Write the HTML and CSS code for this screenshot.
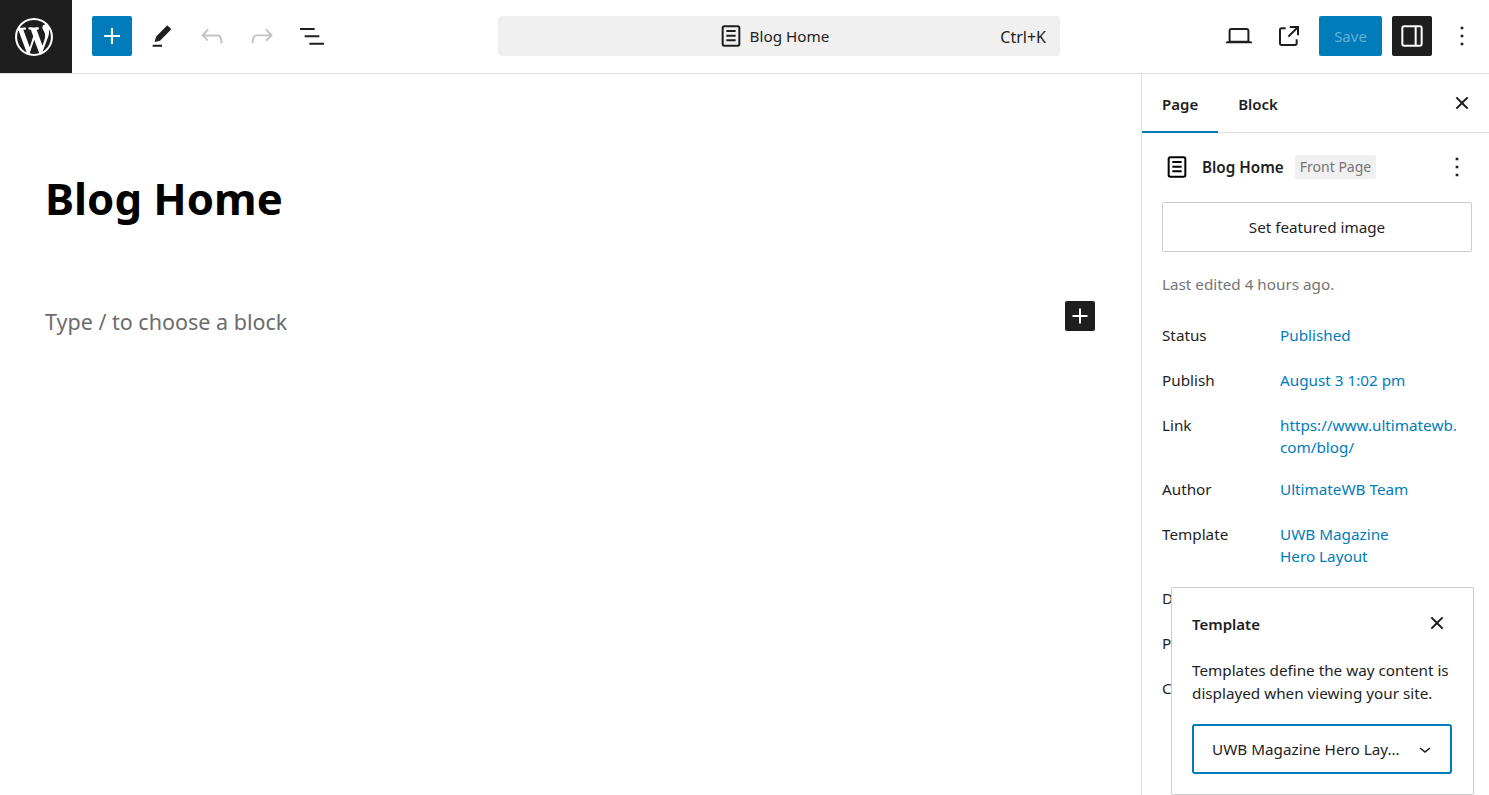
FILE: index.html
```html
<!DOCTYPE html>
<html lang="en">
<head>
  <meta charset="UTF-8">
  <title>Edit Page: Blog Home</title>
  <link rel="stylesheet" href="styles.css">
</head>
<body>
  <header class="topbar">
    <a class="logo" href="#">
      <svg width="38" height="38" viewBox="0 0 20 20"><path d="M20 10c0-5.51-4.49-10-10-10C4.48 0 0 4.49 0 10c0 5.52 4.48 10 10 10 5.51 0 10-4.48 10-10zM7.78 15.37L4.37 6.22c.55-.02 1.17-.08 1.17-.08.5-.06.44-1.13-.06-1.11 0 0-1.45.11-2.37.11-.18 0-.37 0-.58-.01C4.12 2.69 6.87 1.11 10 1.11c2.33 0 4.45.87 6.05 2.34-.68-.11-1.65.39-1.65 1.58 0 .74.45 1.36.9 2.1.35.61.55 1.36.55 2.46 0 1.49-1.4 5-1.4 5l-3.03-8.37c.54-.02.82-.17.82-.17.5-.05.44-1.25-.06-1.22 0 0-1.44.12-2.38.12-.87 0-2.33-.12-2.33-.12-.5-.03-.56 1.2-.06 1.22l.92.08 1.26 3.41zM17.41 10c.24-.64.74-1.87.43-4.25.7 1.29 1.05 2.71 1.05 4.25 0 3.29-1.73 6.24-4.4 7.78.97-2.59 1.94-5.2 2.92-7.78zM6.1 18.09C3.12 16.65 1.11 13.53 1.11 10c0-1.3.23-2.48.72-3.59C3.25 10.3 4.67 14.2 6.1 18.09zm4.03-6.63l2.58 6.98c-.86.29-1.76.45-2.71.45-.79 0-1.57-.11-2.29-.33.81-2.38 1.62-4.74 2.42-7.1z"/></svg>
    </a>
    <div class="tools">
      <button class="icon-btn primary"><svg viewBox="0 0 24 24"><path d="M18 11.2h-5.2V6h-1.6v5.2H6v1.6h5.2V18h1.6v-5.2H18z"/></svg></button>
      <button class="icon-btn"><svg viewBox="0 0 24 24"><path d="m19 7-3-3-8.5 8.5-1 4 4-1L19 7Zm-7 11.5H5V20h7v-1.5Z"/></svg></button>
      <button class="icon-btn disabled"><svg viewBox="0 0 24 24"><path d="M18.3 11.7c-.6-.6-1.4-.9-2.3-.9H6.7l2.9-3.3-1.1-1-4.5 5L8.5 16l1-1-2.7-2.7H16c.5 0 .9.2 1.3.5 1 1 1 3.4 1 4.5v.3h1.5v-.2c0-1.5 0-4.3-1.5-5.7z"/></svg></button>
      <button class="icon-btn disabled"><svg viewBox="0 0 24 24"><path d="M15.6 6.5l-1.1 1 2.9 3.3H8c-.9 0-1.7.3-2.3.9-1.4 1.5-1.4 4.2-1.4 5.6v.2h1.5v-.3c0-1.1 0-3.5 1-4.5.3-.3.7-.5 1.3-.5h9.2L14.5 15l1.1 1.1 4.6-4.6-4.6-5z"/></svg></button>
      <button class="icon-btn"><svg viewBox="0 0 24 24"><path d="M3 6h11v1.5H3V6Zm3.5 5.5h11V13h-11v-1.5ZM21 17H10v1.5h11V17Z"/></svg></button>
    </div>
    <div class="command">
      <div class="command-title">
        <svg viewBox="0 0 24 24"><path d="M15.5 7.5h-7V9h7V7.5Zm-7 3.5h7v1.5h-7V11Zm7 3.5h-7V16h7v-1.5Z"/><path d="M17 4H7a2 2 0 0 0-2 2v12a2 2 0 0 0 2 2h10a2 2 0 0 0 2-2V6a2 2 0 0 0-2-2ZM7 5.5h10a.5.5 0 0 1 .5.5v12a.5.5 0 0 1-.5.5H7a.5.5 0 0 1-.5-.5V6a.5.5 0 0 1 .5-.5Z"/></svg>
        <span>Blog Home</span>
      </div>
      <span class="shortcut">Ctrl+K</span>
    </div>
    <div class="actions">
      <button class="icon-btn"><svg viewBox="0 0 24 24"><path d="M20.5 16h-.7V8c0-1.1-.9-2-2-2H6.2c-1.1 0-2 .9-2 2v8h-.7c-.8 0-1.5.7-1.5 1.5h20c0-.8-.7-1.5-1.5-1.5zM5.7 8c0-.3.2-.5.5-.5h11.6c.3 0 .5.2.5.5v7.6H5.7V8z"/></svg></button>
      <button class="icon-btn"><svg viewBox="0 0 24 24"><path d="M19.5 4.5h-7V6h4.44l-5.97 5.97 1.06 1.06L18 7.06v4.44h1.5v-7Zm-13 1a2 2 0 0 0-2 2v10a2 2 0 0 0 2 2h10a2 2 0 0 0 2-2v-3H17v3a.5.5 0 0 1-.5.5h-10a.5.5 0 0 1-.5-.5v-10a.5.5 0 0 1 .5-.5h3V5.5h-3Z"/></svg></button>
      <button class="save">Save</button>
      <button class="icon-btn dark"><svg viewBox="0 0 24 24"><path d="M18 4H6c-1.1 0-2 .9-2 2v12c0 1.1.9 2 2 2h12c1.1 0 2-.9 2-2V6c0-1.1-.9-2-2-2zm-4 14.5H6c-.3 0-.5-.2-.5-.5V6c0-.3.2-.5.5-.5h8v13zm4.5-.5c0 .3-.2.5-.5.5h-2.5v-13H18c.3 0 .5.2.5.5v12z"/></svg></button>
      <button class="icon-btn"><svg viewBox="0 0 24 24"><path d="M13 19h-2v-2h2v2zm0-6h-2v-2h2v2zm0-6h-2V5h2v2z"/></svg></button>
    </div>
  </header>

  <div class="workspace">
    <main class="editor">
      <h1 class="post-title">Blog Home</h1>
      <div class="empty-block">
        <p>Type / to choose a block</p>
        <button class="block-add"><svg viewBox="0 0 24 24"><path d="M18 11.2h-5.2V6h-1.6v5.2H6v1.6h5.2V18h1.6v-5.2H18z"/></svg></button>
      </div>
    </main>

    <aside class="sidebar">
      <div class="tabs">
        <button class="tab active">Page</button>
        <button class="tab">Block</button>
        <button class="tab-close"><svg viewBox="0 0 24 24"><path d="M12 13.06l3.712 3.713 1.061-1.06L13.061 12l3.712-3.712-1.06-1.06L12 10.938 8.288 7.227l-1.061 1.06L10.939 12l-3.712 3.712 1.06 1.061L12 13.061z"/></svg></button>
      </div>
      <div class="panel">
        <div class="summary">
          <svg class="summary-icon" viewBox="0 0 24 24"><path d="M15.5 7.5h-7V9h7V7.5Zm-7 3.5h7v1.5h-7V11Zm7 3.5h-7V16h7v-1.5Z"/><path d="M17 4H7a2 2 0 0 0-2 2v12a2 2 0 0 0 2 2h10a2 2 0 0 0 2-2V6a2 2 0 0 0-2-2ZM7 5.5h10a.5.5 0 0 1 .5.5v12a.5.5 0 0 1-.5.5H7a.5.5 0 0 1-.5-.5V6a.5.5 0 0 1 .5-.5Z"/></svg>
          <strong>Blog Home</strong>
          <span class="badge">Front Page</span>
          <svg class="summary-more" viewBox="0 0 24 24"><path d="M13 19h-2v-2h2v2zm0-6h-2v-2h2v2zm0-6h-2V5h2v2z"/></svg>
        </div>
        <button class="featured">Set featured image</button>
        <p class="edited">Last edited 4 hours ago.</p>
        <dl class="rows">
          <div class="row"><dt>Status</dt><dd>Published</dd></div>
          <div class="row"><dt>Publish</dt><dd>August 3 1:02 pm</dd></div>
          <div class="row"><dt>Link</dt><dd>https://www.ultimatewb.<br>com/blog/</dd></div>
          <div class="row"><dt>Author</dt><dd>UltimateWB Team</dd></div>
          <div class="row"><dt>Template</dt><dd>UWB Magazine<br>Hero Layout</dd></div>
          <div class="row"><dt>D</dt></div>
          <div class="row"><dt>P</dt></div>
          <div class="row"><dt>C</dt></div>
        </dl>
      </div>

      <div class="popover">
        <div class="popover-head">
          <h2>Template</h2>
          <svg viewBox="0 0 24 24"><path d="M12 13.06l3.712 3.713 1.061-1.06L13.061 12l3.712-3.712-1.06-1.06L12 10.938 8.288 7.227l-1.061 1.06L10.939 12l-3.712 3.712 1.06 1.061L12 13.061z"/></svg>
        </div>
        <p>Templates define the way content is displayed when viewing your site.</p>
        <div class="select">
          <span>UWB Magazine Hero Lay...</span>
          <svg viewBox="0 0 24 24"><path d="M17.5 11.6L12 16l-5.5-4.4.9-1.2L12 14l4.5-3.6 1 1.2z"/></svg>
        </div>
      </div>
    </aside>
  </div>
</body>
</html>
```

FILE: styles.css
```css
* {
  box-sizing: border-box;
}

html, body {
  height: 100%;
}

body {
  margin: 0;
  display: flex;
  flex-direction: column;
  overflow: hidden;
  background: #fff;
  color: #1e1e1e;
  font-family: "Noto Sans", "Open Sans", sans-serif;
  font-size: 15.25px;
}

button {
  font-family: inherit;
  font-size: inherit;
  color: inherit;
  background: none;
  border: none;
  padding: 0;
}

svg {
  fill: currentColor;
  display: block;
}

/* top bar */
.topbar {
  height: 74px;
  flex: none;
  padding-bottom: 1px;
  display: flex;
  align-items: center;
  border-bottom: 1px solid #e0e0e0;
}

.logo {
  width: 72px;
  height: 73px;
  align-self: flex-start;
  padding-right: 4px;
  display: flex;
  align-items: center;
  justify-content: center;
  background: #1e1e1e;
  color: #fff;
}

.tools, .actions {
  display: flex;
  align-items: center;
  gap: 10px;
}

.tools {
  margin-left: 20px;
}

.icon-btn {
  width: 40px;
  height: 40px;
  display: flex;
  align-items: center;
  justify-content: center;
  border-radius: 2px;
}

.icon-btn svg {
  width: 32px;
  height: 32px;
  flex: none;
}

.icon-btn.primary {
  background: #007cba;
  color: #fff;
}

.icon-btn.dark {
  background: #1e1e1e;
  color: #fff;
}

.icon-btn.disabled {
  color: #c4c4c4;
}

.command {
  width: 562px;
  height: 40px;
  margin-left: 166px;
  padding-right: 14px;
  position: relative;
  display: flex;
  align-items: center;
  justify-content: center;
  background: #f0f0f0;
  border-radius: 4px;
}

.command-title {
  display: flex;
  align-items: center;
  gap: 3px;
}

.command-title svg {
  width: 32px;
  height: 32px;
}

.shortcut {
  position: absolute;
  right: 14px;
  top: 10px;
  font-size: 16px;
}

.actions {
  margin-left: auto;
  padding-right: 7px;
}

.save {
  width: 63px;
  height: 40px;
  background: #007cba;
  color: #66b0d6;
  border-radius: 2px;
  font-size: 15px;
}

/* editor */
.workspace {
  flex: 1;
  display: flex;
  min-height: 0;
}

.editor {
  flex: 1;
  padding: 94px 46px 0 45px;
}

.post-title {
  margin: 0;
  font-size: 43.7px;
  line-height: 60px;
  font-weight: 700;
  color: #000;
}

.empty-block {
  margin-top: 69px;
  display: flex;
  align-items: center;
  justify-content: space-between;
  height: 48px;
}

.empty-block p {
  margin: 0;
  font-size: 21.5px;
  color: #6c6c6c;
}

.block-add {
  width: 30px;
  height: 30px;
  margin-top: -10px;
  background: #1e1e1e;
  color: #fff;
  border-radius: 2px;
}

.block-add svg {
  width: 30px;
  height: 30px;
}

/* sidebar */
.sidebar {
  width: 348px;
  flex: none;
  position: relative;
  border-left: 1px solid #e0e0e0;
  overflow: hidden;
}

.tabs {
  height: 59px;
  display: flex;
  align-items: stretch;
  border-bottom: 1px solid #e0e0e0;
}

.tab {
  padding: 1px 20px 0;
  font-size: 15px;
  font-weight: 600;
}

.tab.active {
  box-shadow: inset 0 -2px 0 #007cba;
  margin-bottom: -1px;
}

.tab-close {
  width: 32px;
  margin-left: auto;
  margin-right: 11px;
  display: flex;
  align-items: center;
}

.tab-close svg {
  width: 32px;
  height: 32px;
  flex: none;
}

.panel {
  padding: 19px 17px 0 20px;
}

.summary {
  height: 30px;
  display: flex;
  align-items: center;
}

.summary-icon {
  width: 32px;
  height: 32px;
  flex: none;
  margin-left: -1px;
  margin-right: 9px;
  color: #000;
}

.summary strong {
  font-weight: 600;
}

.badge {
  margin-left: 11px;
  padding: 2px 5px;
  background: #f0f0f0;
  color: #757575;
  font-size: 14px;
  line-height: 20px;
  border-radius: 2px;
}

.summary-more {
  width: 32px;
  height: 32px;
  flex: none;
  margin-left: auto;
  margin-right: -1px;
}

.featured {
  width: 310px;
  height: 50px;
  margin-top: 20px;
  border: 1px solid #ccc;
  border-radius: 2px;
}

.edited {
  margin: 20px 0 0;
  line-height: 24px;
  color: #757575;
}

.rows {
  margin: 28px 0 0;
}

.row {
  display: flex;
  min-height: 25px;
  margin-bottom: 20px;
  line-height: 22px;
}

.row dt {
  width: 118px;
  flex: none;
}

.row dd {
  margin: 0;
  color: #007cba;
}

/* template popover */
.popover {
  position: absolute;
  left: 29px;
  top: 513px;
  width: 303px;
  height: 208px;
  padding: 20px;
  background: #fff;
  border: 1px solid #ccc;
  border-radius: 2px;
}

.popover-head {
  height: 32px;
  display: flex;
  align-items: center;
  justify-content: space-between;
}

.popover-head h2 {
  margin: 0;
  font-size: 15px;
  font-weight: 600;
}

.popover-head svg {
  width: 32px;
  height: 32px;
  margin-bottom: 2px;
}

.popover p {
  margin: 19px 0 0;
  line-height: 23px;
}

.select {
  height: 50px;
  width: 260px;
  margin-top: 19px;
  padding: 0 13px 0 18px;
  display: flex;
  align-items: center;
  justify-content: space-between;
  border: 2px solid #007cba;
  border-radius: 3px;
}

.select svg {
  width: 24px;
  height: 24px;
  flex: none;
}
```
